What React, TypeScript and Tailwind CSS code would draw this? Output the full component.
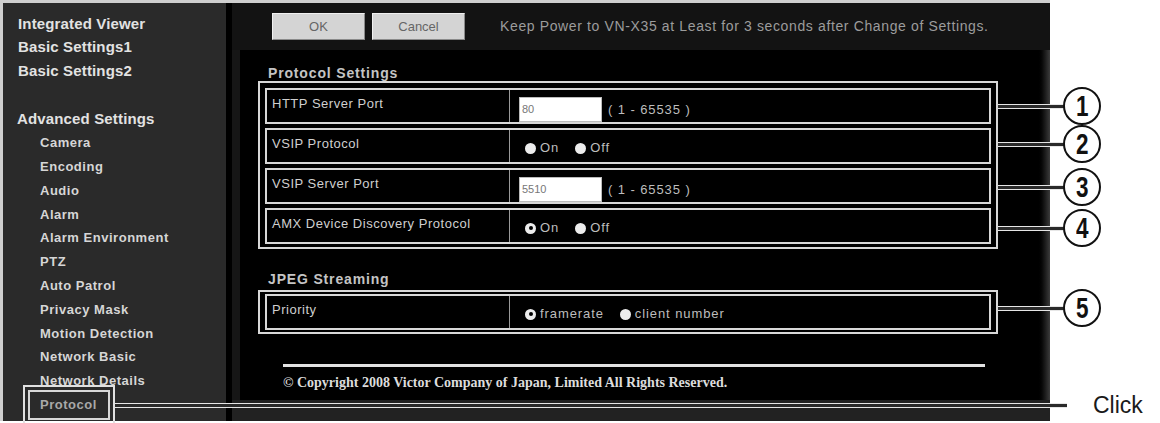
import type { ReactNode } from "react";

const topLinks = ["Integrated Viewer", "Basic Settings1", "Basic Settings2"];
const subLinks = [
  "Camera",
  "Encoding",
  "Audio",
  "Alarm",
  "Alarm Environment",
  "PTZ",
  "Auto Patrol",
  "Privacy Mask",
  "Motion Detection",
  "Network Basic",
  "Network Details",
];

function Sidebar() {
  return (
    <div className="flex w-[223px] shrink-0 flex-col bg-[#2a2a2a] pt-[9px]">
      {topLinks.map((t) => (
        <div key={t} className="flex h-[23.8px] items-center pl-[15px] text-[15px] font-bold tracking-[0.01em] text-[#e2e2e2]">
          {t}
        </div>
      ))}
      <div className="h-[23.8px]" />
      <div className="flex h-[23.8px] items-center pl-[14px] text-[15px] font-bold tracking-[0.01em] text-[#e2e2e2]">Advanced Settings</div>
      {subLinks.map((t) => (
        <div key={t} className="flex h-[23.8px] items-center pl-[37px] text-[13px] font-bold tracking-[0.04em] text-[#d6d6d6]">
          {t}
        </div>
      ))}
      <div className="-mt-[3px] ml-[25px] flex h-[30px] w-[82px] items-center border-2 border-[#d8d8d8] pl-[10px] text-[13px] font-bold tracking-[0.04em] text-[#a8a8a8]">
        Protocol
      </div>
    </div>
  );
}

function Radio({ checked = false, label }: { checked?: boolean; label: string }) {
  return (
    <span className="flex items-center">
      <span className="flex h-[11px] w-[11px] items-center justify-center rounded-full bg-[#ececec]">
        {checked && <span className="h-[4px] w-[4px] rounded-full bg-black" />}
      </span>
      <span className="ml-[4px] text-[13px] tracking-[0.07em] text-[#bdbdbd]">{label}</span>
    </span>
  );
}

function PortInput({ value }: { value: string }) {
  return (
    <>
      <div className="h-[25px] w-[83px] border border-[#bbb] bg-white pl-[2px] pt-[5px] text-[11px] leading-[12px] text-[#777]">{value}</div>
      <span className="mb-[3px] ml-[6px] text-[13px] tracking-[0.07em] text-[#bdbdbd]">( 1 - 65535 )</span>
    </>
  );
}

function Row({ label, children, input = false }: { label: string; children: ReactNode; input?: boolean }) {
  return (
    <div className="flex h-[36px] border-2 border-[#d8d8d8]">
      <div className="w-[243px] shrink-0 border-r border-[#9a9a9a] pl-[5px] pt-[6px] text-[13px] leading-[16px] tracking-[0.04em] text-[#cfcfcf]">
        {label}
      </div>
      {input ? (
        <div className="flex flex-1 items-end pl-[9px]">{children}</div>
      ) : (
        <div className="flex flex-1 items-center gap-[16px] pl-[15px] pt-[4px]">{children}</div>
      )}
    </div>
  );
}

function Heading({ children }: { children: ReactNode }) {
  return <div className="pl-[28px] text-[14px] font-bold leading-[16px] tracking-[0.06em] text-[#c4c4c4]">{children}</div>;
}

function Main() {
  return (
    <div className="flex flex-1 flex-col bg-[#131313]">
      <div className="flex h-[47px] items-center pl-[40px]">
        <button className="h-[27px] w-[93px] border border-t-[#f0f0f0] border-l-[#f0f0f0] border-b-[#8a8a8a] border-r-[#8a8a8a] bg-[#d4d4d4] text-[13px] text-[#666]">
          OK
        </button>
        <button className="ml-[7px] h-[27px] w-[93px] border border-t-[#f0f0f0] border-l-[#f0f0f0] border-b-[#8a8a8a] border-r-[#8a8a8a] bg-[#d4d4d4] text-[13px] text-[#666]">
          Cancel
        </button>
        <span className="ml-[35px] text-[14px] tracking-[0.045em] text-[#9c9c9c]">
          Keep Power to VN-X35 at Least for 3 seconds after Change of Settings.
        </span>
      </div>
      <div className="flex h-[350px]">
        <div className="w-[8px] bg-[#161616]" />
        <div className="w-[797px] bg-black pt-[15px]">
          <Heading>Protocol Settings</Heading>
          <div className="ml-[18px] w-[740px] border-2 border-[#d8d8d8] px-[5px] pb-[3px] pt-[5px]">
            <div className="flex flex-col gap-[4px]">
              <Row label="HTTP Server Port" input>
                <PortInput value="80" />
              </Row>
              <Row label="VSIP Protocol">
                <Radio label="On" />
                <Radio label="Off" />
              </Row>
              <Row label="VSIP Server Port" input>
                <PortInput value="5510" />
              </Row>
              <Row label="AMX Device Discovery Protocol">
                <Radio checked label="On" />
                <Radio label="Off" />
              </Row>
            </div>
          </div>
          <div className="mt-[22px]">
            <Heading>JPEG Streaming</Heading>
          </div>
          <div className="ml-[18px] mt-[3px] w-[740px] border-2 border-[#d8d8d8] px-[5px] py-[2px]">
            <Row label="Priority">
              <Radio checked label="framerate" />
              <Radio label="client number" />
            </Row>
          </div>
          <div className="ml-[43px] mt-[30px] h-[3px] w-[702px] bg-[#e2e2e2]" />
          <div className="ml-[43px] mt-[8px] font-['Liberation_Serif',serif] text-[14px] font-bold leading-[16px] text-[#dcdcdc]">
            © Copyright 2008 Victor Company of Japan, Limited All Rights Reserved.
          </div>
        </div>
        <div className="flex-1 bg-gradient-to-r from-black to-[#3c3c3c]" />
      </div>
      <div className="h-[21px] bg-[#222]" />
    </div>
  );
}

const callouts = [
  { n: "1", y: 106 },
  { n: "2", y: 144 },
  { n: "3", y: 187 },
  { n: "4", y: 228 },
  { n: "5", y: 308 },
];

function Callouts() {
  return (
    <>
      {callouts.map((c) => (
        <div key={c.n}>
          <div className="absolute left-[998px] h-[5px] w-[67px] border-y border-[#e6e6e6] bg-[#2a2a2a]" style={{ top: c.y - 2 }} />
          <div
            className="absolute left-[1063px] flex h-[38px] w-[38px] items-center justify-center rounded-full border-2 border-[#111] bg-white"
            style={{ top: c.y - 19 }}
          >
            <span className="scale-x-75 text-[30px] font-bold leading-none text-[#111]">{c.n}</span>
          </div>
        </div>
      ))}
      <div className="absolute left-[23px] top-[385px] h-[45px] w-[92px] border-2 border-[#e0e0e0]" />
      <div className="absolute left-[115px] top-[403px] h-[5px] w-[952px] border-y border-[#e6e6e6] bg-[#2a2a2a]" />
      <div className="absolute left-[1093px] top-[391px] text-[23px] leading-[28px] text-[#1a1a1a]">Click</div>
    </>
  );
}

export default function App() {
  return (
    <div className="relative h-[423px] w-[1160px] overflow-hidden bg-white font-['Liberation_Sans',Arial,sans-serif]">
      <div className="flex h-[421px] w-[1050px] border-l-[3px] border-t-[3px] border-[#cfcfcf]">
        <Sidebar />
        <div className="w-[6px] shrink-0 bg-black" />
        <Main />
      </div>
      <Callouts />
    </div>
  );
}
